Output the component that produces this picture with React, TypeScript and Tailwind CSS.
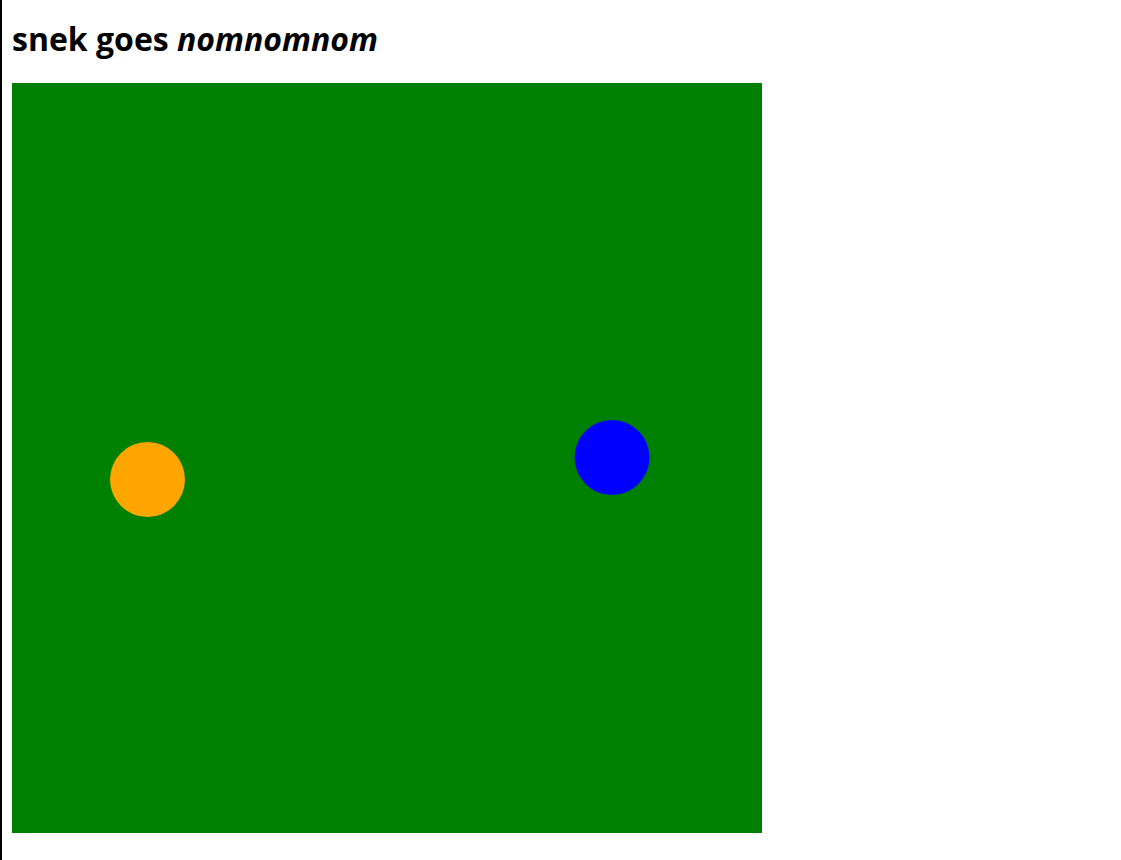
import React from "react";

export default function App() {
  return (
    <div className="h-[860px] border-l-2 border-black bg-white pl-[10px]" style={{ fontFamily: '"Open Sans", "Noto Sans", sans-serif' }}>
      <h1 className="pt-[19px] text-[32px] leading-[40px] font-bold text-black">
        snek goes <em>nomnomnom</em>
      </h1>
      <div className="mt-[24px] w-[750px] h-[750px]">
        <svg width="750" height="750" viewBox="0 0 750 750" className="block">
          <rect x="0" y="0" width="750" height="750" fill="#008000" />
          <circle cx="135.5" cy="396.5" r="37.5" fill="#FFA500" />
          <circle cx="600" cy="374.5" r="37.5" fill="#0000FF" />
        </svg>
      </div>
    </div>
  );
}
